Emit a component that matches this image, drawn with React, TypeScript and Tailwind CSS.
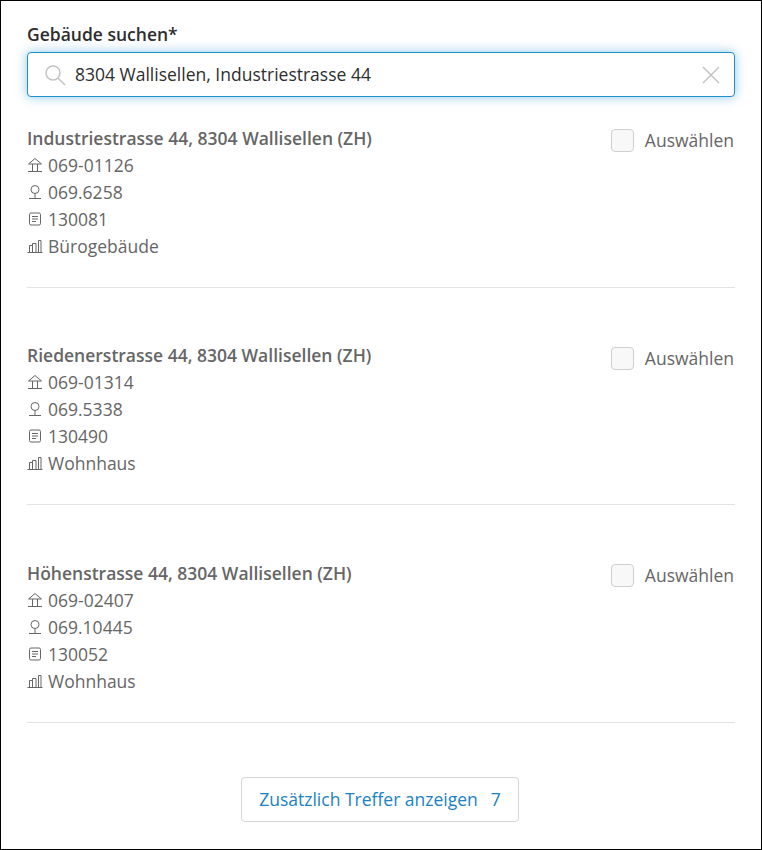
import React from 'react';

const HouseIcon = () => (
  <svg width="16" height="16" viewBox="0 0 16 16" fill="none" stroke="#666" strokeWidth="1" className="shrink-0">
    <path d="M1.500 7 8 1.500 14.500 7z" />
    <path d="M5.500 7v7M10.500 7v7M1 14.500h14" />
  </svg>
);

const PinIcon = () => (
  <svg width="16" height="16" viewBox="0 0 16 16" fill="none" stroke="#666" strokeWidth="1" className="shrink-0">
    <circle cx="8" cy="5.500" r="4" />
    <path d="M8 9.500v4.500M2 14.500h12" />
  </svg>
);

const DocIcon = () => (
  <svg width="16" height="16" viewBox="0 0 16 16" fill="none" stroke="#666" strokeWidth="1" className="shrink-0">
    <rect x="2.500" y="2" width="11" height="12" rx="1.500" />
    <path d="M5 5.500h6M5 8h6M5 10.500h4" />
  </svg>
);

const BuildingIcon = () => (
  <svg width="16" height="16" viewBox="0 0 16 16" fill="none" stroke="#666" strokeWidth="1" className="shrink-0">
    <path d="M0.500 14.500h15M2.500 14V7.500h3V14M5.500 14V5.500h3.500V14M11.500 14V2.500h2.500V14" />
  </svg>
);

type Building = {
  title: string;
  egid: string;
  parcel: string;
  number: string;
  kind: string;
};

const buildings: Building[] = [
  { title: 'Industriestrasse 44, 8304 Wallisellen (ZH)', egid: '069-01126', parcel: '069.6258', number: '130081', kind: 'Bürogebäude' },
  { title: 'Riedenerstrasse 44, 8304 Wallisellen (ZH)', egid: '069-01314', parcel: '069.5338', number: '130490', kind: 'Wohnhaus' },
  { title: 'Höhenstrasse 44, 8304 Wallisellen (ZH)', egid: '069-02407', parcel: '069.10445', number: '130052', kind: 'Wohnhaus' },
];

const Row = ({ icon, text }: { icon: React.ReactNode; text: string }) => (
  <div className="flex h-[27px] items-center gap-[5px]">
    {icon}
    <span>{text}</span>
  </div>
);

const Result = ({ item }: { item: Building }) => (
  <div className="h-[217.500px] pt-[27px]">
    <div className="flex h-[163.500px] items-start justify-between border-b border-[#e3e3e3] pr-[1px]">
      <div>
        <div className="flex h-[27px] items-center font-semibold">{item.title}</div>
        <Row icon={<HouseIcon />} text={item.egid} />
        <Row icon={<PinIcon />} text={item.parcel} />
        <Row icon={<DocIcon />} text={item.number} />
        <Row icon={<BuildingIcon />} text={item.kind} />
      </div>
      <label className="mt-[3px] flex items-center gap-[11px]">
        <span className="h-[23px] w-[23px] rounded-[4px] border border-[#cfcfcf] bg-[#f8f8f8]" />
        <span>Auswählen</span>
      </label>
    </div>
  </div>
);

export default function App() {
  return (
    <div className="h-[850px] w-[762px] overflow-hidden border border-black bg-white px-[26px] pt-[21px] font-['Open_Sans',sans-serif] text-[17.500px] text-[#666]">
      <div className="mb-[6px] flex h-[24px] items-center font-semibold text-[#2e2e2e]">Gebäude suchen*</div>
      <div className="flex h-[45px] items-center rounded-[4px] border-[1.500px] border-[#1f8fd0] bg-white pl-[16px] pr-[14px] text-[#2e2e2e] shadow-[0_0_11px_rgba(31,143,208,0.5)]">
        <svg width="22" height="22" viewBox="0 0 22 22" fill="none" stroke="#c4c4c4" strokeWidth="1.500" className="shrink-0">
          <circle cx="9" cy="9" r="7" />
          <path d="M14 14l7 7" />
        </svg>
        <span className="ml-[9px] flex-1">8304 Wallisellen, Industriestrasse 44</span>
        <svg width="18" height="18" viewBox="0 0 18 18" fill="none" stroke="#c4c4c4" strokeWidth="1.500" className="shrink-0">
          <path d="M1 1l16 16M17 1L1 17" />
        </svg>
      </div>
      <div className="mt-[0.400px]">
        {buildings.map((item) => (
          <Result key={item.title} item={item} />
        ))}
      </div>
      <div className="mt-[27px] flex justify-center pr-[2px]">
        <button className="flex h-[45px] w-[278px] items-center justify-center gap-[13px] rounded-[4px] border-[1.500px] border-[#d5d5d5] bg-white text-[#1a82c4]">
          <span>Zusätzlich Treffer anzeigen</span>
          <span>7</span>
        </button>
      </div>
    </div>
  );
}
